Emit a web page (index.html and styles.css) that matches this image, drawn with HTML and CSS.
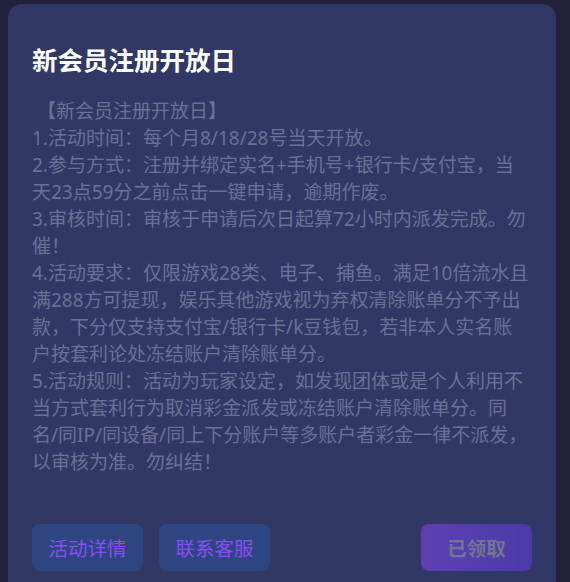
FILE: index.html
```html
<!DOCTYPE html>
<html lang="zh-CN">
<head>
<meta charset="utf-8">
<title>新会员注册开放日</title>
<link rel="stylesheet" href="styles.css">
</head>
<body>
<div class="card">
  <h1 class="title">新会员注册开放日</h1>
  <div class="content">
    <p>&nbsp;【新会员注册开放日】</p>
    <p>1.活动时间：每个月8/18/28号当天开放。</p>
    <p>2.参与方式：注册并绑定实名+手机号+银行卡/支付宝，当天23点59分之前点击一键申请，逾期作废。</p>
    <p>3.审核时间：审核于申请后次日起算72小时内派发完成。勿催！</p>
    <p>4.活动要求：仅限游戏28类、电子、捕鱼。满足10倍流水且满288方可提现，娱乐其他游戏视为弃权清除账单分不予出款，下分仅支持支付宝/银行卡/k豆钱包，若非本人实名账户按套利论处冻结账户清除账单分。</p>
    <p>5.活动规则：活动为玩家设定，如发现团体或是个人利用不当方式套利行为取消彩金派发或冻结账户清除账单分。同名/同IP/同设备/同上下分账户等多账户者彩金一律不派发，以审核为准。勿纠结！</p>
  </div>
  <div class="actions">
    <button class="btn btn-secondary">活动详情</button>
    <button class="btn btn-secondary">联系客服</button>
    <span class="spacer"></span>
    <button class="btn btn-primary">已领取</button>
  </div>
</div>
</body>
</html>
```

FILE: styles.css
```css
* {
  box-sizing: border-box;
}

html, body {
  margin: 0;
  padding: 0;
}

body {
  background: #22223a;
  font-family: "Noto Sans", "Noto Sans CJK SC", sans-serif;
  padding: 4px 14px 0 8px;
}

.card {
  background: #313865;
  border-radius: 14px;
  padding: 38px 24px 24px 24px;
  min-height: 600px;
}

.title {
  margin: 0;
  color: #ffffff;
  font-family: "Noto Sans CJK SC", sans-serif;
  font-size: 25.5px;
  font-weight: 700;
  line-height: 34px;
}

.content {
  margin-top: 22px;
  width: 498px;
  color: #6a7194;
  font-size: 19px;
  line-height: 27px;
}

.content p {
  margin: 0;
}

.actions {
  display: flex;
  align-items: center;
  gap: 16px;
  margin-top: 48px;
}

.spacer {
  flex: 1;
}

.btn {
  width: 111px;
  height: 47px;
  border: none;
  border-radius: 8px;
  font-family: "Noto Sans CJK SC", sans-serif;
  font-size: 19.5px;
  line-height: 1;
  padding: 0;
  cursor: pointer;
}

.btn-secondary {
  background: #2d4682;
  color: #8a4df5;
}

.btn-primary {
  background: linear-gradient(90deg, #5d40b1 0%, #4c3aa9 100%);
  color: #6f7593;
  font-weight: 700;
}
```
